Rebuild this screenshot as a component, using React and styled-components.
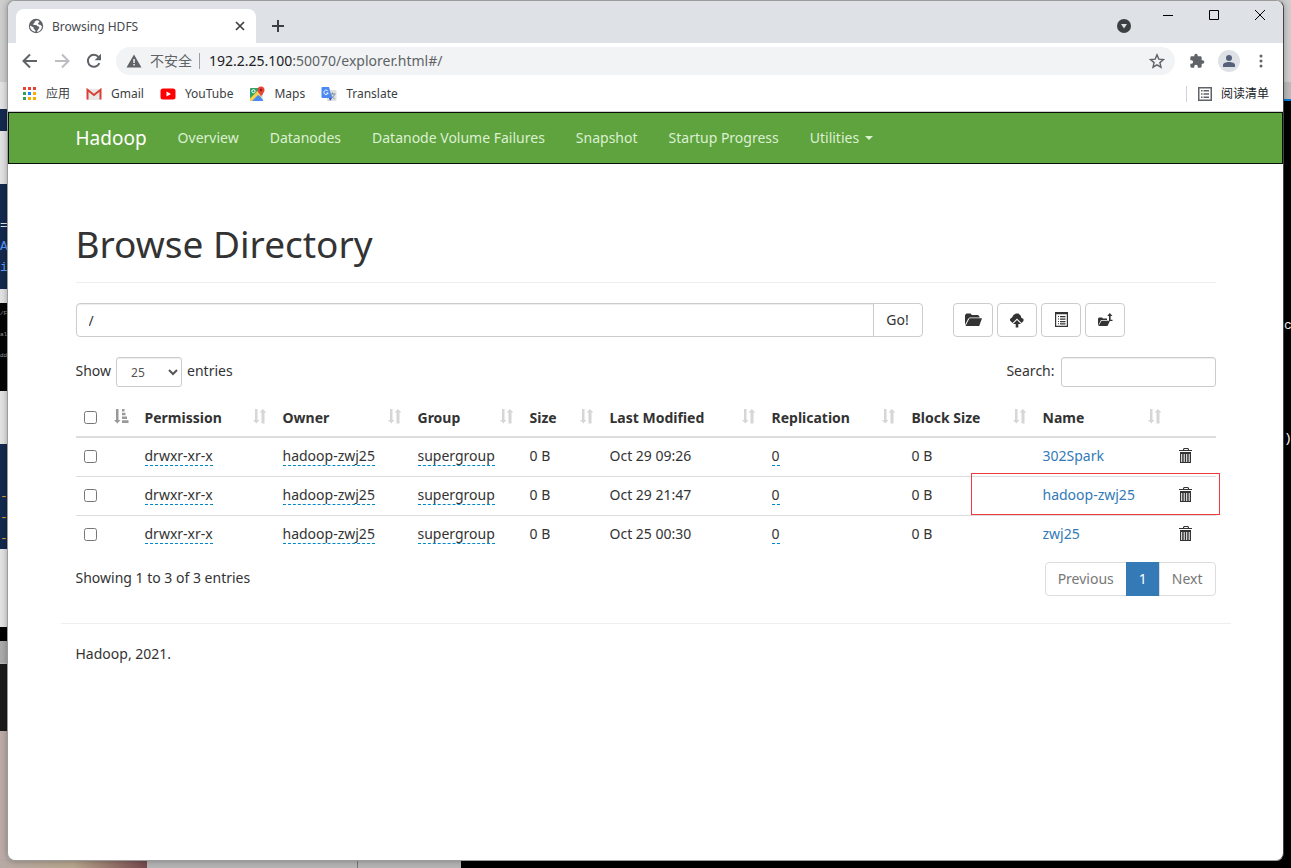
import React from 'react'
import styled, { createGlobalStyle } from 'styled-components'

const GlobalStyle = createGlobalStyle`
  * {
    box-sizing: border-box;
  }
  body {
    margin: 0;
    font-family: 'Noto Sans', 'Noto Sans CJK SC', sans-serif;
    font-size: 14px;
    line-height: 20px;
    color: #333;
  }
  input, button, select {
    font: inherit;
    color: inherit;
  }
`

const Desktop = styled.div`
  position: relative;
  display: flex;
  min-height: 100vh;
  padding: 0 7px 7px;
  background: #bbb;
  overflow: hidden;
`

const Pane = styled.div`
  position: absolute;
  overflow: hidden;
  white-space: pre;
  left: ${(p) => (p.$right ? 'auto' : `${p.$x || 0}px`)};
  right: ${(p) => (p.$right ? 0 : 'auto')};
  top: ${(p) => (p.$bottom ? 'auto' : `${p.$y || 0}px`)};
  bottom: ${(p) => (p.$bottom ? 0 : 'auto')};
  width: ${(p) => p.$w};
  height: ${(p) => p.$h};
  background: ${(p) => p.$bg};
  color: ${(p) => p.$color || '#fff'};
  font-family: 'Liberation Mono', 'Noto Sans CJK SC', monospace;
  font-size: ${(p) => (p.$small ? 6 : 13)}px;
  line-height: 21px;
`

const Window = styled.div`
  position: relative;
  display: flex;
  flex-direction: column;
  flex: 1;
  min-width: 0;
  background: #fff;
  border: 1px solid #9c9c9c;
  border-right-color: #444;
  border-radius: 8px;
  overflow: hidden;
  box-shadow: 0 0 6px rgba(0, 0, 0, 0.3);
`

const TitleBar = styled.header`
  display: flex;
  align-items: flex-end;
  height: 42px;
  padding-left: 8px;
  background: #dee1e6;
`

const Tab = styled.div`
  display: flex;
  align-items: center;
  width: 240px;
  height: 34px;
  padding: 0 8px 0 12px;
  border-radius: 8px 8px 0 0;
  background: #fff;
  color: #45494d;
  font-size: 12px;
  svg {
    flex: none;
  }
  span {
    flex: 1;
    padding: 2px 0 0 8px;
  }
`

const PlainButton = styled.button`
  display: flex;
  align-items: center;
  justify-content: center;
  width: ${(p) => p.$size || 16}px;
  height: ${(p) => p.$size || 16}px;
  padding: 0;
  border: none;
  border-radius: 50%;
  background: ${(p) => p.$bg || 'none'};
  color: ${(p) => p.$color || '#5f6368'};
  flex: none;
`

const NewTab = styled(PlainButton)`
  margin: 0 auto 9px 14px;
`

const TabSearch = styled(PlainButton)`
  margin: 0 14px 10px 0;
`

const WindowControls = styled.div`
  display: flex;
  align-self: flex-start;
  button {
    width: 46px;
    height: 28px;
    color: #000;
  }
`

const Toolbar = styled.div`
  display: flex;
  align-items: center;
  gap: 16px;
  height: 36px;
  padding: 0 14px;
`

const ToolGroup = styled.div`
  display: flex;
  align-items: center;
  gap: 13px;
`

const AddressBar = styled.div`
  display: flex;
  align-items: center;
  flex: 1;
  height: 28px;
  margin: 0 -2px;
  padding: 0 10px;
  border-radius: 14px;
  background: #f1f3f4;
  color: #5f6368;
`

const Insecure = styled.span`
  margin: 0 9px 0 8px;
  padding-right: 7px;
  border-right: 1px solid #9aa0a6;
  line-height: 16px;
`

const Url = styled.span`
  flex: 1;
  b {
    color: #202124;
    font-weight: 400;
  }
`

const Bookmarks = styled.nav`
  display: flex;
  align-items: center;
  gap: 16px;
  height: 33px;
  padding: 0 14px 3px 15px;
  border-bottom: 1px solid #d0d0d0;
  font-size: 12px;
`

const Bookmark = styled.a`
  display: flex;
  align-items: center;
  gap: 9px;
  color: #3c4043;
  text-decoration: none;
`

const ReadingList = styled(PlainButton)`
  gap: 8px;
  width: auto;
  margin-left: auto;
  padding-left: 10px;
  border-left: 1px solid #d0d3d7;
  border-radius: 0;
  color: #202124;
  svg {
    color: #5f6368;
  }
`

const Navbar = styled.nav`
  border: 1px solid #0a1208;
  background: #5fa33e;
`

const Container = styled.div`
  width: 100%;
  max-width: 1170px;
  margin: 0 auto;
  padding: 0 15px;
`

const NavList = styled(Container)`
  display: flex;
  align-items: center;
  gap: 31px;
  height: 50px;
`

const NavLink = styled.a`
  display: flex;
  align-items: center;
  gap: 6px;
  color: ${(p) => (p.$brand ? '#fff' : '#dcf0d3')};
  font-size: ${(p) => (p.$brand ? 19 : 14)}px;
  text-decoration: none;
`

const Caret = styled.span`
  border-top: 4px solid;
  border-left: 4px solid transparent;
  border-right: 4px solid transparent;
`

const Title = styled.h1`
  margin: 58px 0 20px;
  padding-bottom: 16px;
  border-bottom: 1px solid #eee;
  font-size: 37px;
  font-weight: 400;
  line-height: 44px;
`

const Row = styled.div`
  display: flex;
  justify-content: space-between;
  margin-bottom: ${(p) => p.$gap || 0}px;
`

const PathForm = styled.form`
  display: flex;
  flex: 0 1 847px;
  input {
    flex: 1;
    min-width: 0;
    height: 34px;
    padding: 6px 12px;
    border: 1px solid #ccc;
    border-radius: 4px 0 0 4px;
    box-shadow: inset 0 1px 1px rgba(0, 0, 0, 0.075);
  }
  button {
    width: 50px;
    margin-left: -1px;
    padding: 0;
    border: 1px solid #ccc;
    border-radius: 0 4px 4px 0;
    background: #fff;
  }
`

const Actions = styled.div`
  display: flex;
  gap: 4px;
  flex: 0 0 263px;
`

const ActionButton = styled.button`
  display: flex;
  align-items: center;
  justify-content: center;
  width: 40px;
  height: 34px;
  padding: 0;
  border: 1px solid #ccc;
  border-radius: 4px;
  background: #fff;
`

const Field = styled.label`
  display: flex;
  gap: ${(p) => p.$gap}px;
  line-height: 28px;
  select,
  input {
    height: 30px;
    border: 1px solid #ccc;
    border-radius: 3px;
    background: #fff;
    color: #555;
    font-size: 12px;
    box-shadow: inset 0 1px 1px rgba(0, 0, 0, 0.075);
  }
  select {
    width: 66px;
    padding: 5px 10px;
  }
  input {
    width: 155px;
  }
`

const Table = styled.table`
  width: 100%;
  margin-bottom: 8px;
  border-collapse: separate;
  border-spacing: 0;
  table-layout: fixed;
  text-align: left;
`

const HeadCell = styled.th`
  width: ${(p) => p.$width}px;
  height: 41px;
  padding: 2px 8px 0;
  border-bottom: 2px solid #ddd;
  white-space: nowrap;
  > div {
    display: flex;
    justify-content: space-between;
    align-items: center;
  }
  svg {
    margin-bottom: 4px;
    flex: none;
  }
`

const Cell = styled.td`
  position: relative;
  height: ${(p) => (p.$first ? 38 : 39)}px;
  padding: 0 8px 2px;
  border-top: ${(p) => (p.$first ? 0 : 1)}px solid #ddd;
  white-space: nowrap;
  a {
    color: #337ab7;
    text-decoration: none;
  }
`

const Editable = styled.span`
  border-bottom: 1px dashed #08c;
`

const Checkbox = styled.input`
  display: block;
  width: 13px;
  height: 13px;
  margin: 0;
`

const Highlight = styled.div`
  position: absolute;
  top: -4px;
  right: -4px;
  width: 249px;
  height: 42px;
  border: 1px solid #f03a3e;
  pointer-events: none;
`

const Pagination = styled.div`
  display: flex;
`

const PageButton = styled.button`
  height: 34px;
  margin-left: -1px;
  padding: 0 12px;
  border: 1px solid ${(p) => (p.$active ? '#337ab7' : '#ddd')};
  border-radius: ${(p) => p.$radius || 0};
  background: ${(p) => (p.$active ? '#337ab7' : '#fff')};
  color: ${(p) => (p.$active ? '#fff' : '#777')};
`

const Info = styled.div`
  padding-top: 6px;
`

const Footer = styled.footer`
  margin: 27px -15px 0;
  padding: 20px 15px;
  border-top: 1px solid #eee;
`

function Icon({ size = 16, box = 16, children, ...rest }) {
  return (
    <svg width={size} height={size} viewBox={`0 0 ${box} ${box}`} fill="currentColor" aria-hidden="true" {...rest}>
      {children}
    </svg>
  )
}

const stroke = { fill: 'none', stroke: 'currentColor' }

const GlobeIcon = () => (
  <Icon color="#5f6368">
    <circle cx="8" cy="8" r="7.2" />
    <path fill="#fff" d="M9 2.2 6.6 3.4v1.3L4.7 6.2 6.4 7h2l1 1.2 1.6.2.3 1.7-1.6 1.8-.8 2.1c3-.4 5-2.9 5-5.8L12.500 7l-2-.4-.5-1.600 1.500-1.100C11 3 10 2.400 9 2.200zM1.900 7.600c0 3.200 2.300 5.900 5.400 6.300v-1.800L5.700 11V9.400z" />
  </Icon>
)

const BackIcon = ({ flip }) => (
  <Icon {...stroke} strokeWidth="2">
    <path d={flip ? 'M1 8h13M8 1.500 14.500 8 8 14.500' : 'M15 8H2M8 1.500 1.500 8 8 14.500'} />
  </Icon>
)

const ReloadIcon = () => (
  <Icon>
    <path {...stroke} strokeWidth="2" d="M13.400 10.200A6 6 0 1 1 12.500 4" />
    <path d="M15 .8v6.400H8.600z" />
  </Icon>
)

const AppsIcon = () => (
  <Icon size={14} box={14}>
    {['#ea4335', '#ea4335', '#ea4335', '#34a058', '#1a84ff', '#fbab00', '#34a058', '#fbab00', '#fbab00'].map((c, i) => (
      <rect key={i} x={(i % 3) * 5} y={Math.floor(i / 3) * 5} width="3" height="3" fill={c} />
    ))}
  </Icon>
)

const GmailIcon = () => (
  <Icon>
    <path fill="#e8e8e8" d="M1 3h14v11H1z" />
    <path fill="none" stroke="#d93f35" strokeWidth="2" d="M1.500 13.500V3.800L8 9l6.500-5.200v9.700" />
  </Icon>
)

const YouTubeIcon = () => (
  <Icon>
    <rect x=".5" y="2.500" width="15" height="11" rx="2.500" fill="#f00" />
    <path d="m6.500 5.500 4.500 2.500-4.500 2.500z" fill="#fff" />
  </Icon>
)

const MapsIcon = () => (
  <Icon>
    <rect x="1" y="2" width="13" height="13" rx="1" fill="#2fa368" />
    <path d="M1 12.500 9.500 4l3 3L4 15H2a1 1 0 0 1-1-1z" fill="#fbd04b" />
    <path d="m3 15 6-6 5 5v1z" fill="#4a8af4" />
    <path d="m9.500 8.500 2-2L14 9v5z" fill="#e6e6e6" />
    <circle cx="4.500" cy="5.200" r="1.600" fill="none" stroke="#fff" />
    <path d="M12 .5A3.500 3.500 0 0 0 8.500 4c0 2.500 2.500 3.500 3.500 7 1-3.500 3.500-4.500 3.500-7A3.500 3.500 0 0 0 12 .5z" fill="#e94435" />
    <circle cx="12" cy="4" r="1.200" fill="#8c1d18" />
  </Icon>
)

const TranslateIcon = () => (
  <Icon>
    <rect x="6" y="4" width="9.500" height="11" rx="1" fill="#dedede" />
    <path d="M8.500 8h6M11.500 6.500V8M13.500 8c-.5 2-2 3.500-3.500 4.500M10 9c.5 1.500 2 3 3.500 3.500" fill="none" stroke="#7590a5" />
    <path d="M1.500 1H8l3 11H1.500a1 1 0 0 1-1-1V2a1 1 0 0 1 1-1z" fill="#4a88f3" />
    <path d="M8 12h3l-2 3z" fill="#3057b5" />
    <path d="M7 5.200A2.200 2.200 0 1 0 7.200 7H5.300" fill="none" stroke="#fff" />
  </Icon>
)

const ListIcon = () => (
  <Icon>
    <path {...stroke} strokeWidth="1.500" d="M1.750 1.750h12.500v12.500H1.750z" />
    <path d="M4 4h1.500v1.500H4zM6.500 4H12v1.500H6.500zM4 7.200h1.500v1.500H4zM6.500 7.200H12v1.500H6.500zM4 10.500h1.500V12H4zM6.500 10.500H12V12H6.500z" />
  </Icon>
)

const SortIcon = () => (
  <Icon color="#d6d6d6">
    <path d="M4 1h2.500v11h2L5.300 15.500 2 12h2zM10.500 15.500v-11h-2L11.800 1 15.500 4.500h-2v11z" />
  </Icon>
)

const SortAscIcon = () => (
  <Icon color="#999">
    <path d="M3 1h2.500v11h2L4.300 15.500 1 12h2zM9 1h2.500v2.500H9zM9 4.700h3.500v2.500H9zM9 8.500h5v2.500H9zM9 12.300h6.500v2.700H9z" />
  </Icon>
)

// bin with a wide lid and four slots
const TrashIcon = () => (
  <Icon>
    <path fillRule="evenodd" d="M5 2V1l1-1h4l1 1v1h3v1H1V2zm1.200 0h3.600V1H6.200z" />
    <path fillRule="evenodd" d="M2 4h11v11H2zM3.200 6v8h1V6zm2.500 0v8h1V6zm2.500 0v8h1V6zm2.500 0v8h1V6z" />
  </Icon>
)

const FolderIcon = () => (
  <Icon size={18} box={18}>
    <path d="M1 14V4l1.500-1.500h4L8 4h6l1.500 1.500v1H5.500L4 8z" />
    <path d="M5.500 7.200H18L15.200 15H1.500z" />
  </Icon>
)

const UploadIcon = () => (
  <Icon>
    <path d="M3.500 11 1 8.500V7l2-1.500L4.500 3 7 1.500h2.500L12 4v1.500L14.500 7v2L12.500 11 8 6.500z" />
    <path d="m8 8 4 4H9.300v3.500H6.700V12H4z" />
  </Icon>
)

const PasteIcon = () => (
  <Icon>
    <path fillRule="evenodd" d="M2 0h13v15H2zM3.200 2.300v11.500h10.600V2.300z" />
    <path d="M5 4h1v1H5zM7 4h5.500v1.300H7zM5 6.500h1v1H5zM7 6.500h5.500v1.300H7zM5 9h1v1H5zM7 9h5.500v1.300H7zM5 11.300h1v1H5zM7 11.300h5.500v1.200H7z" />
  </Icon>
)

const MoveIcon = () => (
  <Icon>
    <path d="M1 14V6.500l1-1h3l1 1h4V8H4z" />
    <path d="M4.500 8.800H13L10.500 14h-9z" />
    <path d="M12 9V4h-1.800L12.800 1l2.600 3h-1.800v3.800H15.500V9z" />
  </Icon>
)

const columns = [
  ['Permission', 138],
  ['Owner', 135],
  ['Group', 112],
  ['Size', 80],
  ['Last Modified', 162],
  ['Replication', 140],
  ['Block Size', 131],
  ['Name', 135],
]

const files = [
  { name: '302Spark', modified: 'Oct 29 09:26' },
  { name: 'hadoop-zwj25', modified: 'Oct 29 21:47', marked: true },
  { name: 'zwj25', modified: 'Oct 25 00:30' },
]

const actions = [
  ['Create directory', FolderIcon],
  ['Upload files', UploadIcon],
  ['Cut and paste', PasteIcon],
  ['Parent directory', MoveIcon],
]

// edges of the windows lying behind the browser
function Backdrop() {
  return (
    <div aria-hidden="true">
      <Pane $w="100%" $h="82px" $bg="#cecece" />
      <Pane $y={82} $w="8px" $h="562px" $bg="#e2e2e2" />
      <Pane $y={109} $w="8px" $h="22px" $bg="#14294e" />
      <Pane $y={184} $w="8px" $h="105px" $bg="#14294e" />
      <Pane $y={215} $w="8px" $h="21px" $color="#e6e6e6">=</Pane>
      <Pane $y={236} $w="8px" $h="21px" $color="#5a9bf5">A</Pane>
      <Pane $y={257} $w="8px" $h="21px" $color="#5a9bf5">i</Pane>
      <Pane $y={303} $w="8px" $h="88px" $bg="#050505" $color="#999" $small>{'/F\nal\ndd'}</Pane>
      <Pane $y={444} $w="8px" $h="105px" $bg="#14294e" $color="#d9a03c">{'\n\n-\n-\n-'}</Pane>
      <Pane $y={627} $w="8px" $h="14px" $bg="#000" />
      <Pane $y={641} $w="8px" $h="22px" $bg="#aaa" />
      <Pane $y={664} $w="8px" $h="67px" $bg="#1b1b1b" />
      <Pane $y={731} $w="8px" $h="137px" $bg="#bcaca8" />
      <Pane $bottom $w="147px" $h="9px" $bg="linear-gradient(90deg, #b7a9a4, #b5a58c 50%, #75494d)" />
      <Pane $bottom $x={147} $w="314px" $h="9px" $bg="#b4b4b4" />
      <Pane $bottom $x={357} $w="1px" $h="9px" $bg="#777" />
      <Pane $bottom $x={461} $w="100%" $h="9px" $bg="#000" />
      <Pane $right $y={100} $w="9px" $h="100%" $bg="#000" />
      <Pane $right $y={99} $w="9px" $h="2px" $bg="#0078d4" />
      <Pane $right $y={315} $w="7px" $h="21px">c</Pane>
      <Pane $right $y={428} $w="7px" $h="21px">)</Pane>
    </div>
  )
}

function Browser({ children }) {
  return (
    <Window>
      <TitleBar>
        <Tab>
          <GlobeIcon />
          <span>Browsing HDFS</span>
          <PlainButton aria-label="Close tab" $color="#3c4043">
            <Icon size={10} box={10} {...stroke} strokeWidth="1.700"><path d="m1 1 8 8M9 1 1 9" /></Icon>
          </PlainButton>
        </Tab>
        <NewTab aria-label="New tab" $color="#3c4043">
          <Icon size={12} box={12} {...stroke} strokeWidth="2"><path d="M6 0v12M0 6h12" /></Icon>
        </NewTab>
        <TabSearch aria-label="Search tabs" $size={14} $bg="#3c4043" $color="#dee1e6">
          <Icon size={8} box={8}><path d="M1 2h6L4 6.500z" /></Icon>
        </TabSearch>
        <WindowControls>
          <PlainButton aria-label="Minimize"><Icon size={10} box={10}><path d="M0 5h10v1H0z" /></Icon></PlainButton>
          <PlainButton aria-label="Maximize"><Icon size={10} box={10} {...stroke}><path d="M.5.5h9v9h-9z" /></Icon></PlainButton>
          <PlainButton aria-label="Close"><Icon size={10} box={10} {...stroke}><path d="m0 0 10 10M10 0 0 10" /></Icon></PlainButton>
        </WindowControls>
      </TitleBar>
      <Toolbar>
        <PlainButton aria-label="Back"><BackIcon /></PlainButton>
        <PlainButton aria-label="Forward" $color="#bbbdc0"><BackIcon flip /></PlainButton>
        <PlainButton aria-label="Reload"><ReloadIcon /></PlainButton>
        <AddressBar>
          <Icon><path fillRule="evenodd" d="M8 1.500 15.500 14.500H.5zM7.300 6v4h1.500V6zm0 5v1.500h1.500V11z" /></Icon>
          <Insecure>不安全</Insecure>
          <Url><b>192.2.25.100</b>:50070/explorer.html#/</Url>
          <PlainButton aria-label="Bookmark this page">
            <Icon {...stroke} strokeWidth="1.400"><path d="m8 1.800 1.800 4.300 4.700.4-3.600 3.100 1.100 4.600L8 11.800l-4 2.400 1.100-4.600-3.600-3.100 4.700-.4z" /></Icon>
          </PlainButton>
        </AddressBar>
        <ToolGroup>
          <PlainButton aria-label="Extensions">
            <Icon box={24}><path d="M20.500 11H19V7a2 2 0 0 0-2-2h-4V3.500a2.500 2.500 0 0 0-5 0V5H4a2 2 0 0 0-2 2v3.800h1.500a2.700 2.700 0 0 1 0 5.400H2V20a2 2 0 0 0 2 2h3.800v-1.500a2.700 2.700 0 0 1 5.400 0V22H17a2 2 0 0 0 2-2v-4h1.500a2.500 2.500 0 0 0 0-5z" /></Icon>
          </PlainButton>
          <PlainButton aria-label="Profile" $size={22} $bg="#dee1e6" $color="#55607a">
            <Icon size={14} box={14}><circle cx="7" cy="4" r="3" /><path d="M1 13v-2c0-2 3-3 6-3s6 1 6 3v2z" /></Icon>
          </PlainButton>
          <PlainButton aria-label="Menu">
            <Icon><circle cx="8" cy="3" r="1.500" /><circle cx="8" cy="8" r="1.500" /><circle cx="8" cy="13" r="1.500" /></Icon>
          </PlainButton>
        </ToolGroup>
      </Toolbar>
      <Bookmarks>
        <Bookmark href="#apps"><AppsIcon />应用</Bookmark>
        <Bookmark href="#gmail"><GmailIcon />Gmail</Bookmark>
        <Bookmark href="#youtube"><YouTubeIcon />YouTube</Bookmark>
        <Bookmark href="#maps"><MapsIcon />Maps</Bookmark>
        <Bookmark href="#translate"><TranslateIcon />Translate</Bookmark>
        <ReadingList><ListIcon />阅读清单</ReadingList>
      </Bookmarks>
      {children}
    </Window>
  )
}

function FileTable() {
  return (
    <Table>
      <thead>
        <tr>
          <HeadCell $width={61}>
            <div>
              <Checkbox type="checkbox" aria-label="Select all" />
              <SortAscIcon />
            </div>
          </HeadCell>
          {columns.map(([label, width]) => (
            <HeadCell key={label} $width={width}>
              <div>
                {label}
                <SortIcon />
              </div>
            </HeadCell>
          ))}
          <HeadCell $width={46} />
        </tr>
      </thead>
      <tbody>
        {files.map((file, i) => (
          <tr key={file.name}>
            <Cell $first={i === 0}><Checkbox type="checkbox" aria-label={`Select ${file.name}`} /></Cell>
            <Cell $first={i === 0}><Editable>drwxr-xr-x</Editable></Cell>
            <Cell $first={i === 0}><Editable>hadoop-zwj25</Editable></Cell>
            <Cell $first={i === 0}><Editable>supergroup</Editable></Cell>
            <Cell $first={i === 0}>0 B</Cell>
            <Cell $first={i === 0}>{file.modified}</Cell>
            <Cell $first={i === 0}><Editable>0</Editable></Cell>
            <Cell $first={i === 0}>0 B</Cell>
            <Cell $first={i === 0}><a href={`#/${file.name}`}>{file.name}</a></Cell>
            <Cell $first={i === 0}>
              <PlainButton aria-label={`Delete ${file.name}`} $color="#333"><TrashIcon /></PlainButton>
              {file.marked && <Highlight />}
            </Cell>
          </tr>
        ))}
      </tbody>
    </Table>
  )
}

function App() {
  return (
    <Desktop>
      <GlobalStyle />
      <Backdrop />
      <Browser>
        <Navbar>
          <NavList>
            <NavLink $brand href="#hadoop">Hadoop</NavLink>
            {['Overview', 'Datanodes', 'Datanode Volume Failures', 'Snapshot', 'Startup Progress'].map((label) => (
              <NavLink key={label} href="#nav">{label}</NavLink>
            ))}
            <NavLink href="#utilities">Utilities<Caret /></NavLink>
          </NavList>
        </Navbar>
        <Container as="main">
          <Title>Browse Directory</Title>
          <Row $gap={20}>
            <PathForm onSubmit={(e) => e.preventDefault()}>
              <input aria-label="Directory" defaultValue="/" />
              <button type="submit">Go!</button>
            </PathForm>
            <Actions>
              {actions.map(([label, Glyph]) => (
                <ActionButton key={label} aria-label={label}><Glyph /></ActionButton>
              ))}
            </Actions>
          </Row>
          <Row $gap={10}>
            <Field $gap={5}>
              Show
              <select defaultValue="25">
                <option>25</option>
                <option>50</option>
              </select>
              entries
            </Field>
            <Field $gap={6}>
              Search:
              <input type="search" />
            </Field>
          </Row>
          <FileTable />
          <Row>
            <Info>Showing 1 to 3 of 3 entries</Info>
            <Pagination>
              <PageButton $radius="4px 0 0 4px">Previous</PageButton>
              <PageButton $active>1</PageButton>
              <PageButton $radius="0 4px 4px 0">Next</PageButton>
            </Pagination>
          </Row>
          <Footer>Hadoop, 2021.</Footer>
        </Container>
      </Browser>
    </Desktop>
  )
}

export default App
